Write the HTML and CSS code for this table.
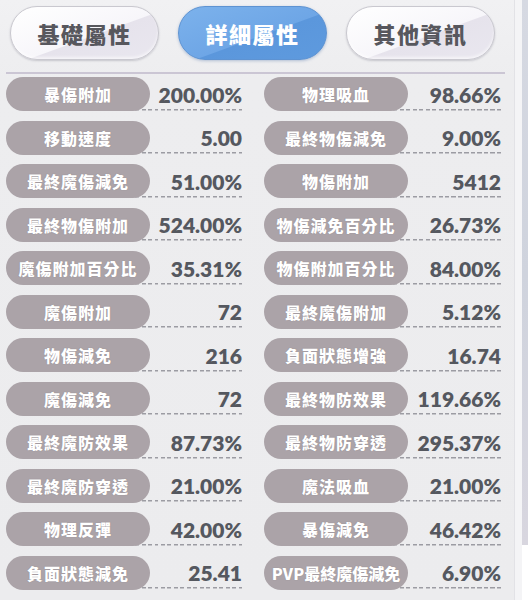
FILE: index.html
```html
<!DOCTYPE html>
<html>
<head>
<meta charset="utf-8">
<link rel="stylesheet" href="styles.css">
</head>
<body>
<div class="page">
  <div class="panel">
    <div class="tabs">
      <div class="tab">基礎屬性</div>
      <div class="tab active">詳細屬性</div>
      <div class="tab">其他資訊</div>
    </div>
    <div class="sep"></div>
    <div class="grid">
      <div class="cell"><div class="label">暴傷附加</div><div class="value">200.00%</div></div>
      <div class="cell"><div class="label">物理吸血</div><div class="value">98.66%</div></div>
      <div class="cell"><div class="label">移動速度</div><div class="value">5.00</div></div>
      <div class="cell"><div class="label">最終物傷減免</div><div class="value">9.00%</div></div>
      <div class="cell"><div class="label">最終魔傷減免</div><div class="value">51.00%</div></div>
      <div class="cell"><div class="label">物傷附加</div><div class="value">5412</div></div>
      <div class="cell"><div class="label">最終物傷附加</div><div class="value">524.00%</div></div>
      <div class="cell"><div class="label">物傷減免百分比</div><div class="value">26.73%</div></div>
      <div class="cell"><div class="label">魔傷附加百分比</div><div class="value">35.31%</div></div>
      <div class="cell"><div class="label">物傷附加百分比</div><div class="value">84.00%</div></div>
      <div class="cell"><div class="label">魔傷附加</div><div class="value">72</div></div>
      <div class="cell"><div class="label">最終魔傷附加</div><div class="value">5.12%</div></div>
      <div class="cell"><div class="label">物傷減免</div><div class="value">216</div></div>
      <div class="cell"><div class="label">負面狀態增強</div><div class="value">16.74</div></div>
      <div class="cell"><div class="label">魔傷減免</div><div class="value">72</div></div>
      <div class="cell"><div class="label">最終物防效果</div><div class="value">119.66%</div></div>
      <div class="cell"><div class="label">最終魔防效果</div><div class="value">87.73%</div></div>
      <div class="cell"><div class="label">最終物防穿透</div><div class="value">295.37%</div></div>
      <div class="cell"><div class="label">最終魔防穿透</div><div class="value">21.00%</div></div>
      <div class="cell"><div class="label">魔法吸血</div><div class="value">21.00%</div></div>
      <div class="cell"><div class="label">物理反彈</div><div class="value">42.00%</div></div>
      <div class="cell"><div class="label">暴傷減免</div><div class="value">46.42%</div></div>
      <div class="cell"><div class="label">負面狀態減免</div><div class="value">25.41</div></div>
      <div class="cell"><div class="label tight">PVP最終魔傷減免</div><div class="value">6.90%</div></div>
    </div>
  </div>
  <div class="side">
    <div class="side-edge"></div>
    <div class="side-bg"><div class="side-blur"></div><div class="side-white"></div></div>
  </div>
</div>
</body>
</html>
```
FILE: styles.css
```css
html, body {
  margin: 0;
  padding: 0;
}
body {
  width: 528px;
  height: 600px;
  overflow: hidden;
  background: #ededef;
  font-family: "Noto Sans CJK TC", "Noto Sans", sans-serif;
}
.page {
  display: flex;
  height: 600px;
}
.panel {
  width: 514px;
  height: 600px;
  background: linear-gradient(to bottom, #f1f1f3 0, #ededef 80px, #ececee 100%);
}
.side {
  flex: 1;
  display: flex;
}
.side-edge {
  width: 7px;
  background: #f4f4f6;
  border-left: 1px solid #e2e2e6;
}
.side-bg {
  flex: 1;
  display: flex;
  flex-direction: column;
}
.side-blur {
  height: 545px;
  background: linear-gradient(to bottom, #d6d9e2, #cfd3dd 50%, #d8d6df);
}
.side-white {
  flex: 1;
  background: #ffffff;
}
.tabs {
  display: flex;
  gap: 19px;
  padding: 6px 0 0 10px;
  height: 54px;
}
.tab {
  width: 147px;
  height: 52px;
  border-radius: 27px;
  border: 1px solid #c9c8cf;
  background: linear-gradient(160deg, #ffffff 0%, #f7f6fa 55%, #e6e3ec 56%, #e9e7ef 100%);
  box-shadow: 0 1px 2px rgba(80, 80, 100, 0.25), inset 0 -2px 3px rgba(255,255,255,0.6);
  display: flex;
  align-items: center;
  justify-content: center;
  font-size: 22px;
  font-weight: 900;
  letter-spacing: 1.5px;
  color: #57575d;
}
.tab.active {
  color: #ffffff;
  border-color: #5e93d2;
  background: linear-gradient(160deg, #7cb2ec 0%, #6ea6e6 55%, #5b97dc 56%, #5e9ade 100%);
  box-shadow: 0 1px 3px rgba(60, 100, 160, 0.35);
}
.sep {
  margin: 12px 9px 0 6px;
  height: 2px;
  background: #cbc6d4;
}
.grid {
  display: grid;
  grid-template-columns: 236px 237px;
  column-gap: 22px;
  row-gap: 9.5px;
  padding: 3px 0 0 6px;
}
.cell {
  display: flex;
  height: 34px;
}
.label {
  position: relative;
  z-index: 1;
  width: 144px;
  flex: none;
  height: 34px;
  border-radius: 17px;
  background: #aba3a8;
  color: #ffffff;
  font-size: 16px;
  font-weight: 900;
  letter-spacing: 1px;
  display: flex;
  align-items: center;
  justify-content: center;
  white-space: nowrap;
  text-shadow: 0 0 1px rgba(90, 80, 90, 0.4);
}
.label.tight {
  letter-spacing: 0;
}
.value {
  flex: 1;
  margin-left: -15px;
  height: 34px;
  display: flex;
  align-items: center;
  justify-content: flex-end;
  font-family: "Lato", "Liberation Sans", sans-serif;
  font-weight: 800;
  font-size: 21px;
  color: #55585f;
  background: repeating-linear-gradient(to right, #9c9ca3 0 4px, transparent 4px 6.5px) left bottom 1px / 100% 1.5px no-repeat;
}
```
